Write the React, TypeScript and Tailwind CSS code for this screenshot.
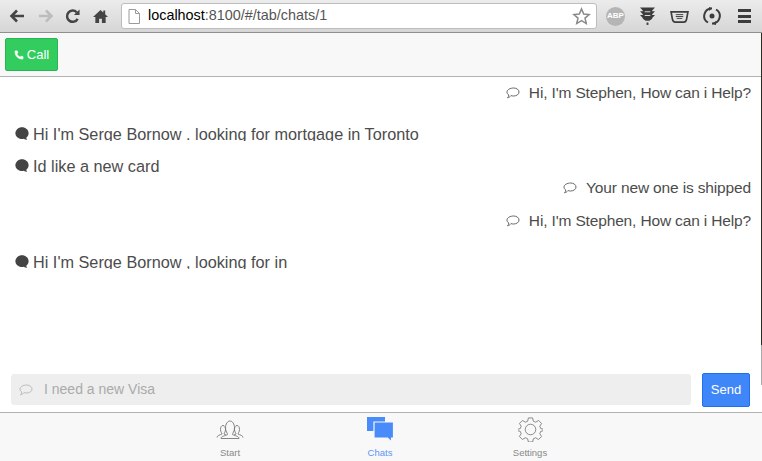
import { Phone } from 'lucide-react'

const BubbleOutline = ({ className }: { className: string }) => (
  <svg viewBox="0 0 14 12" className={className} fill="none" stroke="currentColor" strokeWidth="1">
    <path d="M7.500 1C10.500 1 13 2.600 13 5s-2.500 4-5.500 4c-.9 0-1.700-.1-2.400-.4C4.300 9.500 3 10.600 1.500 10.800c.8-.8 1.300-1.700 1.300-2.800C1.600 7.300 1 6.200 1 5c0-2.400 3.500-4 6.500-4z" />
  </svg>
)

const BubbleSolid = () => (
  <svg viewBox="0 0 14 14" className="h-[14px] w-[14px] shrink-0 text-[#444]" fill="currentColor">
    <path d="M7 .3c3.600 0 6.600 2.600 6.600 5.900 0 1.800-.9 3.400-2.300 4.500.1.800.4 1.600.9 2.300-1.200 0-2.400-.5-3.300-1.200-.6.100-1.200.2-1.900.2C3.400 12 .4 9.400.4 6.200S3.400.3 7 .3z" />
  </svg>
)

const Incoming = ({ text, className }: { text: string; className: string }) => (
  <div className={`flex h-[24px] items-start justify-end overflow-hidden pr-[11px] text-[15.5px] leading-[24px] tracking-[-0.15px] text-[#4c4c4c] ${className}`}>
    <BubbleOutline className="mr-[9px] mt-[6px] h-[12px] w-[14px] shrink-0 text-[#666]" />
    <span>{text}</span>
  </div>
)

// the reference cuts the descenders off on the clipped rows, so the height is set per row
const Outgoing = ({ text, className }: { text: string; className: string }) => (
  <div className={`flex items-start overflow-hidden pl-[15px] text-[16.250px] text-[#4c4c4c] ${className}`}>
    <span className="mr-[4px] mt-[5px]"><BubbleSolid /></span>
    <span>{text}</span>
  </div>
)

const ChromeBar = () => (
  <div className="flex h-[33px] items-center border-b border-[#8f8f8f] bg-gradient-to-b from-[#ececec] to-[#d6d6d6]">
    <div className="flex w-[121px] items-center">
      <svg viewBox="0 0 16 14" className="ml-[9px] h-[14px] w-[16px] text-[#444]" fill="none" stroke="currentColor" strokeWidth="2.600">
        <path d="M15 7H3M8 1.500 2.500 7 8 12.500" />
      </svg>
      <svg viewBox="0 0 16 14" className="ml-[13px] h-[14px] w-[16px] text-[#bdbdbd]" fill="none" stroke="currentColor" strokeWidth="2.600">
        <path d="M1 7h12M8 1.500 13.500 7 8 12.500" />
      </svg>
      <svg viewBox="0 0 16 16" className="ml-[11px] h-[15px] w-[15px] text-[#444]" fill="none" stroke="currentColor" strokeWidth="2.600">
        <path d="M13.500 10.500A6 6 0 1 1 12.500 3.500" />
        <path d="M9.500 6.500h6v-6z" fill="currentColor" stroke="none" />
      </svg>
      <svg viewBox="0 0 16 16" className="ml-[13px] h-[15px] w-[15px] text-[#444]" fill="currentColor">
        <path d="M8 1 0 8.500h2.500V15h4v-4.500h3V15h4V8.500H16l-3-2.800V1.500h-2v2.300z" />
      </svg>
    </div>
    <div className="flex h-[26px] w-[476px] items-center rounded-[3px] border border-[#bdbdbd] bg-white pl-[6px] pr-[5px] text-[14.400px]">
      <svg viewBox="0 0 12 15" className="mr-[8px] h-[15px] w-[12px] text-[#9a9a9a]" fill="#fff" stroke="currentColor" strokeWidth="1">
        <path d="M1 .5h6.500l4 4v10H1zM7.500 .5v4h4" />
      </svg>
      <span className="text-black">localhost</span>
      <span className="text-[#555]">:8100/#/tab/chats/1</span>
      <svg viewBox="0 0 20 20" className="ml-auto h-[19px] w-[19px] text-[#8a8a8a]" fill="none" stroke="currentColor" strokeWidth="1.600">
        <path d="m10 2 2.300 5.400 5.700.5-4.300 3.800 1.300 5.700-5-3-5 3 1.300-5.700L2 7.900l5.700-.5z" />
      </svg>
    </div>
    <div className="flex flex-1 items-center">
      <div className="ml-[9px] flex h-[19px] w-[19px] items-center justify-center rounded-full bg-[#b5b5b5] text-[8px] font-bold text-white">ABP</div>
      <svg viewBox="0 0 16 20" className="ml-[15px] h-[20px] w-[15px] text-[#3c3c3c]" fill="currentColor">
        <path d="M0 1h16l-3 3v1h3l-3 3v1h3l-3 3v1l-3 2H6l-3-2v-1L0 9h3V8L0 5h3V4z" />
        <path d="M7 17h2v2.500H7z" />
        <path d="M5 5.500h6M5 9.500h6" stroke="#d8d8d8" strokeWidth="1.200" />
      </svg>
      <svg viewBox="0 0 20 16" className="ml-[15px] h-[15px] w-[19px] text-[#3c3c3c]" fill="none" stroke="currentColor">
        <path d="M1 3h18l-1.500 8c-.3 1.500-1.500 3-3 3h-9c-1.500 0-2.700-1.500-3-3z" strokeWidth="1.800" />
        <path d="M6 6h8M6 8h8M7 10h6" strokeWidth="1" />
      </svg>
      <svg viewBox="0 0 18 18" className="ml-[14px] h-[18px] w-[18px] text-[#3c3c3c]" fill="none" stroke="currentColor" strokeWidth="2">
        <path d="M5 15.500A7.500 7.500 0 0 1 9 1.500M13 2.500A7.500 7.500 0 0 1 9 16.500" />
        <path d="M9 1 6 0v4zM9 17l4 1v-4z" fill="currentColor" stroke="none" />
        <circle cx="9" cy="9" r="2.500" fill="currentColor" stroke="none" />
      </svg>
      <div className="ml-[17px] flex w-[13px] flex-col gap-[2.500px]">
        <div className="h-[3px] bg-[#3c3c3c]" />
        <div className="h-[3px] bg-[#3c3c3c]" />
        <div className="h-[3px] bg-[#3c3c3c]" />
      </div>
    </div>
  </div>
)

const TabBar = () => (
  <div className="flex h-[49px] justify-center border-t border-[#b2b2b2] bg-[#f8f8f8] pl-[1px] text-[9.500px]">
    <div className="-ml-[3px] flex w-[150px] flex-col items-center text-[#888]">
      <svg viewBox="0 0 28 20" className="mt-[6px] h-[20px] w-[28px]" fill="none" stroke="#777" strokeWidth="0.900">
        <path d="M1 18.500c0-2 3-2.500 5-3.500 0-1-1.500-2-1.500-4.500C4.500 8 5.500 6.500 7 6.500s2.500 1.500 2.500 4c0 2.500-1.500 3.500-1.500 4.500l2 1" />
        <path d="M27 18.500c0-2-3-2.500-5-3.500 0-1 1.500-2 1.500-4.500 0-2.500-1-4-2.500-4s-2.500 1.500-2.500 4c0 2.500 1.500 3.500 1.500 4.500l-2 1" />
        <path d="M5 19.500c0-2.500 4-2.500 6.500-4 0-1.500-2-3-2-6.500 0-4 2-7 4.500-7s4.500 3 4.500 7c0 3.500-2 5-2 6.500 2.500 1.500 6.500 1.500 6.500 4z" />
      </svg>
      <span className="mt-[7px]">Start</span>
    </div>
    <div className="flex w-[150px] flex-col items-center text-[#5b95fb]">
      <svg viewBox="0 0 28 27" className="mt-[3px] h-[27px] w-[28px]" fill="#4a8bfc">
        <path d="M1 1h18v14H1z" />
        <path d="M8 6h19.500v16H25.500v4l-4-4H8z" stroke="#f8f8f8" strokeWidth="1.200" />
      </svg>
      <span className="mt-[3px]">Chats</span>
    </div>
    <div className="flex w-[150px] flex-col items-center text-[#888]">
      <svg viewBox="0 0 26 26" className="mt-[4px] h-[25px] w-[25px]" fill="none" stroke="#777" strokeWidth="0.900">
        <path d="M10.800 1h4.400l.8 3.400 2.400 1 3-1.800 3.100 3.100-1.800 3 1 2.400 3.400.8v1.200l-3.400.8-1 2.400 1.800 3-3.100 3.100-3-1.800-2.400 1-.8 3.400h-4.400l-.8-3.400-2.400-1-3 1.800-3.100-3.100 1.800-3-1-2.400-3.400-.8v-1.200l3.400-.8 1-2.400-1.800-3 3.100-3.100 3 1.800 2.400-1z" />
        <circle cx="13" cy="13" r="5.500" />
      </svg>
      <span className="mt-[4px]">Settings</span>
    </div>
  </div>
)

export default function App() {
  return (
    <div className="relative flex h-[461px] w-[762px] flex-col overflow-hidden bg-white font-['Liberation_Sans',sans-serif]">
      <ChromeBar />
      <div className="flex h-[44px] items-center border-b border-[#b2b2b2] bg-[#f8f8f8] pl-[5px]">
        <button className="flex h-[33px] w-[53px] items-center justify-center gap-[3px] rounded-[2px] border border-[#28b55a] bg-[#33cd5f] text-[13px] text-white">
          <Phone className="h-[10px] w-[10px]" fill="currentColor" strokeWidth={1} />
          Call
        </button>
      </div>
      <div className="flex flex-1 flex-col">
        <Incoming text="Hi, I'm Stephen, How can i Help?" className="mt-[4px]" />
        <Outgoing text="Hi I'm Serge Bornow . looking for mortgage in Toronto" className="mt-[17px] h-[19px]" />
        <Outgoing text="Id like a new card" className="mt-[13px] h-[24px]" />
        <Incoming text="Your new one is shipped" className="mt-[-2px]" />
        <Incoming text="Hi, I'm Stephen, How can i Help?" className="mt-[9px]" />
        <Outgoing text="Hi I'm Serge Bornow , looking for in" className="mt-[17px] h-[19px]" />
        <div className="mt-auto flex items-start gap-[11px] pb-[5px] pl-[11px] pr-[12px]">
          <div className="mt-[1px] flex h-[31px] flex-1 items-center rounded-[3px] bg-[#eeeeee] pl-[8px] text-[14px] text-[#aaa]">
            <BubbleOutline className="mr-[11px] h-[12px] w-[14px] text-[#bbb]" />
            I need a new Visa
          </div>
          <button className="h-[34px] w-[48px] rounded-[2px] border border-[#1f6fef] bg-[#3f87f9] text-[13px] text-white">Send</button>
        </div>
      </div>
      <TabBar />
      <div className="absolute right-0 top-[33px] flex h-[352px] w-[1px] flex-col">
        <div className="flex-1 bg-[#2c2c20]" />
        <div className="h-[40px] bg-[#aaaaaa]" />
      </div>
    </div>
  )
}
